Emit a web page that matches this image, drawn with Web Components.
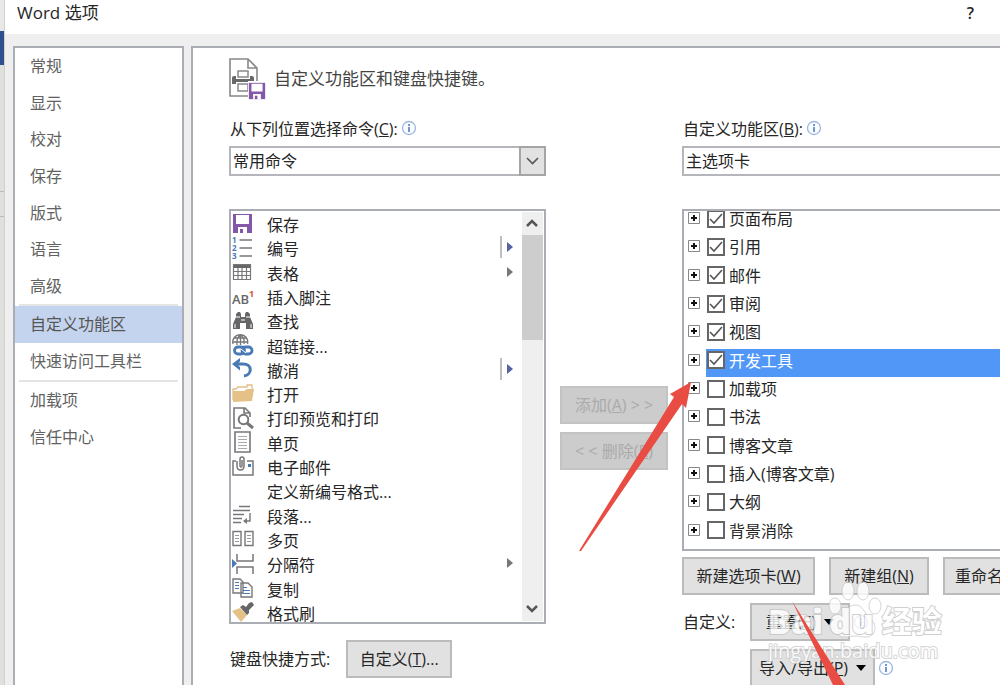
<!DOCTYPE html>
<html lang="zh-CN">
<head>
<meta charset="utf-8">
<title>Word 选项</title>
<style>
html,body{height:100%}
body{margin:0;overflow:hidden;background:#efefef;color:#262626;font:16px/24px "Open Sans","Noto Sans CJK SC",sans-serif}
</style>
</head>
<body>
<options-dialog></options-dialog>
<script>
const define=(name,html,setup)=>{
  const t=document.createElement('template');
  t.innerHTML=html;
  customElements.define(name,class extends HTMLElement{
    constructor(){
      super();
      this.attachShadow({mode:'open'}).append(t.content.cloneNode(true));
    }
    connectedCallback(){ if(setup) setup(this,this.shadowRoot); }
  });
};
const G='#777',B='#4a7ab5';
const floppy='<path fill="#8557a8" d="M1 1h19v19H1z"/><path fill="#fff" d="M4 2h13v9H4zM6 14h9v6H6z"/><path fill="#8557a8" d="M8 16h3v4H8z"/>';
const icons={
  save:floppy,
  number:`<g font-family="Open Sans" font-size="8" font-weight="700" fill="${B}"><text x="0" y="6">1</text><text x="0" y="14">2</text><text x="0" y="22">3</text></g><path stroke="${G}" stroke-width="1.5" d="M7.500 3H20M7.500 11H20M7.500 19H20"/>`,
  table:`<path fill="#666" d="M1 3h18v4H1z"/><path fill="none" stroke="${G}" stroke-width="1.200" d="M1.500 3.500h17v15h-17zM1 10.500h18M1 14.500h18M6 7v11M10 7v11M14.500 7v11"/>`,
  note:`<text x="0" y="18" font-family="Open Sans" font-size="13" font-weight="600" fill="#666">AB</text><text x="17" y="11" font-family="Open Sans" font-size="9" font-weight="700" fill="#d0562f">1</text>`,
  find:`<path fill="#666" d="M4 4l2-2h2l1 2v3h4V4l1-2h2l2 2v3l3 7v5h-7v-6H8v6H1v-5l3-7z"/><path stroke="#fff" d="M4 7h4M14 7h4M9 10h4" stroke-width="1"/><path fill="#fff" d="M2.500 14h1v4h-1zM18.500 14h1v4h-1z"/>`,
  link:`<g fill="none" stroke="${G}" stroke-width="1.300"><path d="M1 10a7.500 7.500 0 1 1 14.500 0M1 8h15M2 4h13M5 11Q4 4 8.500 1Q13 4 12 10M8.500 1v10"/></g><g fill="none" stroke="${B}" stroke-width="2.800"><rect x="2.500" y="13" width="10" height="7" rx="3.500"/><rect x="10" y="13" width="10" height="7" rx="3.500"/></g><path stroke="#fff" stroke-width="1" d="M9 15l5 4"/>`,
  undo:`<path fill="none" stroke="${B}" stroke-width="3" d="M3 6h8c10 0 9 11 1 12"/><path fill="${B}" d="M0 6l8-6v3.500L5 6l3 3v3.500z"/>`,
  open:`<path fill="#fff" stroke="#e3bf86" stroke-width="1.300" d="M1 17V6h3l2-2h9V2h5v7"/><path fill="#e6c187" d="M1 19V8h11l3-2h7l-2 12z"/>`,
  preview:`<path fill="none" stroke="${G}" stroke-width="1.600" d="M9 21H2V1h11l5 5v4M12 1v5h6"/><circle cx="11.500" cy="12.500" r="4.800" fill="#fff" stroke="${G}" stroke-width="2"/><path stroke="${G}" stroke-width="3" d="M15 16l6 5"/>`,
  page:`<path fill="none" stroke="${G}" stroke-width="1.600" d="M3 1h15v20H3z"/><path stroke="#aaa" d="M6 5.500h9M6 8.500h9M6 11.500h9M6 14.500h9M6 17.500h9"/>`,
  mail:`<path fill="none" stroke="${G}" stroke-width="1.500" d="M4 5H1v14h20V5h-6M5 5v5q0 4 3.500 4t3.500-4V3q0-2-2-2T8 3v7q0 1 1 1t1-1V4"/><path fill="${B}" d="M16 8h3v3h-3z"/>`,
  none:'',
  para:`<path fill="none" stroke="${G}" stroke-width="1.400" d="M7 2.500h11M1 6.500h17M1 10.500h11M1 14.500h9M1 18.500h8M18 9v8h-5"/><path fill="${G}" d="M11 17l4-3v6z"/>`,
  pages:`<path fill="none" stroke="${G}" stroke-width="1.400" d="M1 3.500h8v14H1zM13 3.500h8v14h-8z"/><path stroke="#999" d="M3 7.500h4M3 10.500h4M3 13.500h4M15 7.500h4M15 10.500h4M15 13.500h4"/>`,
  brk:`<path fill="none" stroke="${G}" stroke-width="1.500" d="M5 1v7h16V1M5 21v-7h16v7"/><path fill="${B}" d="M0 6l5 4.500-5 4.500z"/>`,
  copy:`<path fill="#fff" stroke="${G}" stroke-width="1.400" d="M1 2h7l3 3v11H1zM9 6h7l4 4v10H9z"/><path stroke="${B}" d="M3 5.500h4M3 8.500h4M3 11.500h4M11 10.500h4M11 13.500h7M11 16.500h7"/>`,
  brush:`<path fill="#e6c187" d="M0 10l8-3 7 7-6 7z"/><path fill="#666" d="M8 6l3-2 3 2 3-4 3-1 2 3-5 5v3l-2 2z"/>`
};

define('desktop-edge',`<style>
:host{display:flex;flex-direction:column;background:#dfdfdd;border-right:1px solid #d3d3cd;box-sizing:border-box}
i{display:block}.a{height:31px;background:#e8e8e8}.b{height:34px;background:#2f4f8f}.c{height:126px}.d{height:24px;border:solid #bbb;border-width:1px 0}
</style><i class="a"></i><i class="b"></i><i class="c"></i><i class="d"></i>`);

define('title-bar',`<style>
:host{display:flex;align-items:flex-start;justify-content:space-between;height:34px;box-sizing:border-box;padding:1px 26px 0 12px;background:#fff}
h1{margin:0;font:inherit;font-size:17px}
button{all:unset;font-weight:600;cursor:pointer}
</style><h1><slot></slot></h1><button aria-label="帮助">?</button>`);

define('nav-item',`<style>
:host{display:grid;align-items:center}
a{display:flex;align-items:center;height:100%;padding-left:15px;color:#626262;text-decoration:none}
:host([current]) a{background:#c5d4ee;color:#555}
</style><a href="#"><slot></slot></a>`);

define('nav-panel',`<style>
:host{display:block;background:#fff;border:2px solid #abadb5;border-bottom:0;box-sizing:border-box}
div{display:grid;grid-auto-rows:1fr;height:73px}
.long{height:256px}
hr{border:0;height:2px;background:#e4e4e4;margin:0 4px}
hr+div+hr{margin-top:1px}
</style><nav>
<div class="long"><nav-item>常规</nav-item><nav-item>显示</nav-item><nav-item>校对</nav-item><nav-item>保存</nav-item><nav-item>版式</nav-item><nav-item>语言</nav-item><nav-item>高级</nav-item></div><hr>
<div><nav-item current>自定义功能区</nav-item><nav-item>快速访问工具栏</nav-item></div><hr>
<div><nav-item>加载项</nav-item><nav-item>信任中心</nav-item></div></nav>`);

define('info-mark',`<style>:host{display:block;width:16px;height:16px}svg{display:block}</style>
<svg width="16" height="16" viewBox="0 0 16 16"><circle cx="8" cy="8" r="6.500" fill="#fbfcff" stroke="#9db7e0" stroke-width="1.300"/><path fill="#7295cc" d="M7 4h2v2H7zM7 7h2v5H7z"/></svg>`);

define('push-button',`<style>
:host{display:block;flex:none}
button{display:flex;align-items:center;justify-content:center;gap:8px;width:100%;height:38px;box-sizing:border-box;padding:0 10px;border:2px solid #bbb;background:#e1e1e1;color:#262626;font:inherit;white-space:nowrap}
:host([disabled]) button{background:#ccc;border-color:#c3c3c3;color:#aaa}
i{display:none;border:5px solid transparent;border-top:6px solid #000;border-bottom:0}
:host([menu]) i{display:block}
</style><button><span><slot></slot></span><i></i></button>`,(el,r)=>{r.querySelector('button').disabled=el.hasAttribute('disabled')});

define('drop-field',`<style>
:host{display:block}
.label{display:flex;align-items:center;gap:3px;height:24px;padding-left:1px}
info-mark{margin-bottom:2px}
.field{position:relative;margin-top:5px}
select{appearance:none;display:block;width:100%;height:30px;box-sizing:border-box;border:2px solid #b4b6bc;border-radius:0;background:#fff;color:#262626;font:inherit;line-height:24px;padding:0 2px}
svg{position:absolute;right:0;top:0;pointer-events:none}
</style><div class="label"><label for="s"><slot></slot></label><info-mark></info-mark></div>
<div class="field"><select id="s"><option></option></select><svg width="28" height="30" viewBox="0 0 28 30"><path fill="#e2e2e2" stroke="#a5a5a5" stroke-width="2" d="M2 1h25v28H2z"/><path fill="none" stroke="#555" stroke-width="1.600" d="M9 12l5.500 5.500L20 12"/></svg></div>`,
(el,r)=>{r.querySelector('option').textContent=el.getAttribute('value');r.querySelector('select').setAttribute('aria-label',el.textContent)});

define('command-row',`<style>
:host{display:flex;align-items:center;min-height:0;padding-left:1px}
svg{display:block;overflow:visible;flex:none}
#icon{margin:-3px 13px 0 0}
span{flex:1;white-space:nowrap}
#more{display:none;margin-right:6px}
:host([more]) #more{display:block}
#more{color:#5662a3;margin-top:-4px}
:host([more=menu]) #more{color:#777}
:host([more=menu]) #line{display:none}
</style><svg id="icon" width="22" height="22" viewBox="0 0 22 22"></svg><span><slot></slot></span>
<svg id="more" width="16" height="22" viewBox="0 0 16 22"><path id="line" stroke="#aaa" stroke-width="1.500" d="M2 0v22"/><path fill="currentColor" d="M8 6l6 5-6 5z"/></svg>`,
(el,r)=>{r.querySelector('#icon').innerHTML=icons[el.getAttribute('icon')]});

define('command-list',`<style>
:host{display:flex;height:415px;box-sizing:border-box;border:2px solid #abadb5;background:#fff;overflow:hidden}
.rows{flex:1;display:grid;grid-auto-rows:1fr;padding-top:2px;margin-bottom:-4px}
.bar{width:21px;margin:1px;background:#efefef;display:flex;flex-direction:column}
.bar svg{display:block}
.thumb{height:105px;background:#cdcdcd;margin-bottom:auto}
path{fill:none;stroke:#555;stroke-width:2.500}
</style><div class="rows"><slot></slot></div>
<div class="bar"><svg width="21" height="23"><path d="M5 14l5-5 5 5"/></svg><div class="thumb"></div><svg width="21" height="24"><path d="M5 9l5 5 5-5"/></svg></div>`);

define('tab-row',`<style>
:host{display:flex;align-items:center;min-height:0;padding-left:4px}
svg{display:block;margin:-2px 6px 0 0;flex:none}
label{flex:1;height:100%;display:flex;align-items:center;padding-left:1px;white-space:nowrap}
:host([current]) label{background:linear-gradient(#5097f7,#5097f7) 0 2px no-repeat;box-shadow:0 2px #5097f7;color:#fff}
input{appearance:none;flex:none;width:18px;height:18px;box-sizing:border-box;border:2px solid #666;margin:0 4px 1px 0;background:#fff}
input:checked{background:#fff url("data:image/svg+xml,%3Csvg xmlns='http://www.w3.org/2000/svg' viewBox='0 0 14 14'%3E%3Cpath d='M1 7l4 4 8-9' fill='none' stroke='%23555' stroke-width='1.600'/%3E%3C/svg%3E") center/14px no-repeat}
</style><svg width="12" height="12" viewBox="0 0 12 12"><path fill="#fff" stroke="#888" d="M.5.5h11v11H.5z"/><path stroke="#111" stroke-width="2" d="M3 6h6M6 3v6"/></svg><label><input type="checkbox"><span><slot></slot></span></label>`,
(el,r)=>{r.querySelector('input').checked=el.hasAttribute('checked')});

define('tab-list',`<style>
:host{display:block;height:342px;box-sizing:border-box;border:2px solid #abadb5;background:#fff;overflow:hidden}
div{display:grid;grid-auto-rows:1fr;height:340px;margin-top:-6px}
</style><div><slot></slot></div>`);

define('page-heading',`<style>
:host{display:flex;align-items:center;gap:7px;height:40px}
h2{margin:0;font:inherit;font-size:17px;color:#444}svg{display:block}
</style><svg width="38" height="42" viewBox="0 0 38 42"><path fill="#fff" stroke="#888" stroke-width="1.600" d="M1 1h18l9 9v28H1zM19 1v9h9"/><path fill="#686868" d="M3 20q0-2 2-2h2v3h14v-3h2q2 0 2 2v6h-4v-2H7v2H3z"/><path fill="#fff" stroke="#888" stroke-width="1.500" d="M9 13h10v6H9zM9 26h10v7H9z"/><path fill="#fff" d="M19 23h18v18H19z"/><svg x="19" y="24" width="18" height="18" viewBox="0 0 21 21">${floppy}</svg></svg><h2><slot></slot></h2>`);

define('site-mark',`<style>
:host{display:block;width:180px;height:90px;pointer-events:none;opacity:.8;color:#fff}
.name{display:flex;align-items:center;height:36px;padding-top:22px;-webkit-text-stroke:2px #c4c4c4;paint-order:stroke fill;font-weight:700}
.name b{font-size:34px;line-height:36px}.name b+b{margin-left:6px}
.name span{font-size:30px;line-height:36px;margin-left:8px}
p{margin:0;font-size:20px;line-height:24px;-webkit-text-stroke:2px #ccc;paint-order:stroke fill}
svg{position:absolute;left:60px;top:0;z-index:-1}
</style><svg width="54" height="58" viewBox="0 0 54 58"><g fill="#fff" stroke="#ccc"><ellipse cx="7" cy="25" rx="6" ry="8"/><ellipse cx="20" cy="10" rx="6" ry="9"/><ellipse cx="35" cy="10" rx="6" ry="9"/><ellipse cx="47" cy="25" rx="6" ry="8"/><path d="M27 24c8 0 9 8 15 13 9 8 5 19-4 19-6 0-6-1-11-1s-5 1-11 1c-9 0-13-11-4-19 6-5 7-13 15-13z"/></g></svg>
<div class="name"><b>Bai</b><b>du</b><span>经验</span></div><p>jingyan.baidu.com</p>`);

define('ribbon-page',`<style>
:host{display:block;background:#fff;border:solid #abadb5;border-width:2px 0 0 2px;box-sizing:border-box;padding:11px 0 0 36px;min-width:0;overflow:hidden}
.cols{display:grid;grid-template-columns:317px 108px minmax(0,1fr);gap:14px;margin-top:18px}
command-list,tab-list{margin-top:33px}
.row{display:flex;align-items:center}
.keys{margin-top:16px;gap:16px;padding-left:1px}
.keys push-button{width:106px}
.move{display:grid;gap:8px;align-content:start;padding-top:269px}
.right drop-field,.right tab-list{margin-right:-60px}
.tools{margin:6px 0 8px 0;gap:14px}
.w1{width:133px}.w2{width:100px}.w4{width:125px}
.set{display:grid;grid-template-columns:67px 1fr;row-gap:8px;align-items:center;margin-left:1px}
.set .row{gap:3px}
</style>
<page-heading>自定义功能区和键盘快捷键。</page-heading>
<div class="cols">
<section><drop-field value="常用命令">从下列位置选择命令(<u>C</u>):</drop-field>
<command-list>
<command-row icon="save">保存</command-row><command-row icon="number" more="split">编号</command-row><command-row icon="table" more="menu">表格</command-row><command-row icon="note">插入脚注</command-row><command-row icon="find">查找</command-row><command-row icon="link">超链接...</command-row><command-row icon="undo" more="split">撤消</command-row><command-row icon="open">打开</command-row><command-row icon="preview">打印预览和打印</command-row><command-row icon="page">单页</command-row><command-row icon="mail">电子邮件</command-row><command-row icon="none">定义新编号格式...</command-row><command-row icon="para">段落...</command-row><command-row icon="pages">多页</command-row><command-row icon="brk" more="menu">分隔符</command-row><command-row icon="copy">复制</command-row><command-row icon="brush">格式刷</command-row>
</command-list>
<div class="row keys"><span>键盘快捷方式:</span><push-button>自定义(<u>T</u>)...</push-button></div></section>
<div class="move"><push-button disabled>添加(<u>A</u>) &gt; &gt;</push-button><push-button disabled>&lt; &lt; 删除(<u>R</u>)</push-button></div>
<section class="right"><drop-field value="主选项卡">自定义功能区(<u>B</u>):</drop-field>
<tab-list><tab-row checked>页面布局</tab-row><tab-row checked>引用</tab-row><tab-row checked>邮件</tab-row><tab-row checked>审阅</tab-row><tab-row checked>视图</tab-row><tab-row checked current>开发工具</tab-row><tab-row>加载项</tab-row><tab-row>书法</tab-row><tab-row>博客文章</tab-row><tab-row>插入(博客文章)</tab-row><tab-row>大纲</tab-row><tab-row>背景消除</tab-row></tab-list>
<div class="row tools"><push-button class="w1">新建选项卡(<u>W</u>)</push-button><push-button class="w2">新建组(<u>N</u>)</push-button><push-button>重命名(<u>M</u>)...</push-button></div>
<div class="set"><span>自定义:</span><div class="row"><push-button menu class="w2">重置(<u>E</u>)</push-button><info-mark></info-mark></div>
<span></span><div class="row"><push-button menu class="w4">导入/导出(<u>P</u>)</push-button><info-mark></info-mark></div></div>
</section></div>`);

define('options-dialog',`<style>
:host{display:grid;grid-template-columns:5px minmax(0,1fr);height:100vh;position:relative;overflow:hidden}
.dialog{display:grid;grid-template-rows:34px minmax(0,1fr)}
.panes{display:grid;grid-template-columns:171px minmax(0,1fr);gap:7px;padding:12px 0 0 8px;min-height:0}
site-mark{position:absolute;left:768px;top:581px;z-index:1}
.arrows{position:absolute;left:579px;top:381px;z-index:2;pointer-events:none}
</style>
<desktop-edge></desktop-edge>
<div class="dialog"><title-bar>Word 选项</title-bar><div class="panes"><nav-panel></nav-panel><ribbon-page></ribbon-page></div></div>
<site-mark></site-mark>
<svg class="arrows" width="270" height="304" viewBox="0 0 270 304"><g fill="#e84c43"><path d="M112 1L91 13l4 3L0 170h2L103 23l4 4z"/><path d="M213 220l41 84h12z"/></g></svg>`);
</script>
</body>
</html>
